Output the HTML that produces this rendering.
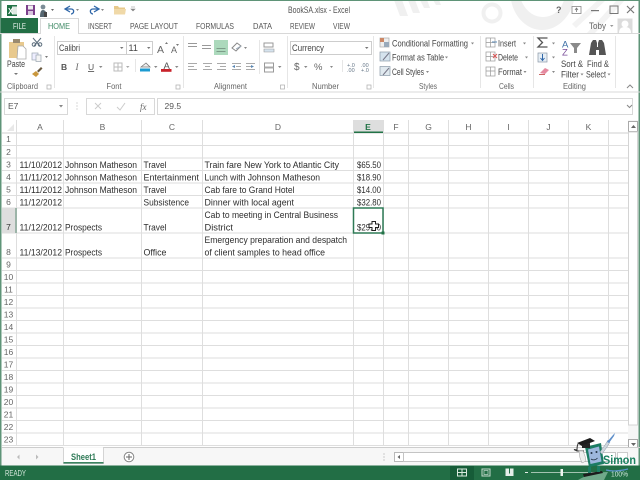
<!DOCTYPE html>
<html><head><meta charset="utf-8"><style>
html,body{margin:0;padding:0;background:#fff;width:640px;height:480px;overflow:hidden}
svg{display:block;font-family:"Liberation Sans",sans-serif}
text{fill:#555;font-size:9px}
.c text{fill:#2e2e2e;font-size:9.2px}
.h text{fill:#666;font-size:8.5px;text-anchor:middle}
.r text{fill:#666;font-size:8.5px;text-anchor:middle}
.g{stroke:#dedede;stroke-width:1;fill:none}
</style></head><body>
<svg width="640" height="480" viewBox="0 0 640 480" xmlns="http://www.w3.org/2000/svg">
<defs><filter id="b" x="-2%" y="-2%" width="104%" height="104%"><feGaussianBlur stdDeviation="0.38"/></filter></defs>
<g filter="url(#b)">
<rect width="640" height="480" fill="#fff"/>
<!-- title watermark -->
<g fill="#f0f0f0">
<path d="M394 0h8l6 16h-8zM408 0h7l5 13h-7zM420 0h7l3 8h-6zM433 0h6l2 5h-5z"/>
<circle cx="492" cy="13" r="8.500" fill="none" stroke="#f0f0f0" stroke-width="4"/>
<path d="M511 0h10c4 10 12 17 22 17 10 0 18-7 21-17h10c-3 16-16 30-32 30-15 0-28-13-31-30z"/>
<path d="M572 24l26-24h8l-30 28zM587 33l30-33h8l-30 33z" fill="#f3f3f3"/>
</g>
<!-- window edge -->
<rect x="0" y="0" width="640" height="1" fill="#5f9478"/>
<rect x="0" y="0" width="1.500" height="466" fill="#5f9478"/>
<rect x="638.500" y="0" width="1.500" height="466" fill="#5f9478"/>
<!-- QAT -->
<rect x="7" y="5" width="10" height="11" fill="#217346"/><rect x="12" y="6.500" width="5" height="8" fill="#dfe9e3"/>
<text x="8" y="14" style="font-size:8px;font-weight:bold;fill:#fff">X</text>
<rect x="26" y="5" width="9" height="10" fill="#7c3f8c"/><rect x="28" y="5.500" width="5" height="4" fill="#eee"/><rect x="28" y="11" width="5" height="4" fill="#d8c7de"/>
<circle cx="43" cy="7" r="2.400" fill="#7b8c96"/><path d="M40 17c0-5 1-7 3-7s4 2 4 7z" fill="#55666f"/><rect x="44" y="12" width="3" height="5" fill="#444"/>
<path d="M51 9h3l-1.500 2z" fill="#666"/>
<path d="M70 6l-5 3 5 3M66 9h5c4 0 3 5 0 5" fill="none" stroke="#2f66a8" stroke-width="1.300"/>
<path d="M76 9h3l-1.500 2z" fill="#888"/>
<path d="M94 6l5 3-5 3M98 9h-5c-4 0-3 5 0 5" fill="none" stroke="#2f66a8" stroke-width="1.300"/>
<path d="M101 9h3l-1.500 2z" fill="#888"/>
<path d="M114 6h4l1 1.500h6v7h-11z" fill="#e7c98b"/><path d="M114 9h12l-1 5.500h-11z" fill="#f0d9a8"/>
<path d="M131 7h4M131 9h4l-2 2z" stroke="#888" stroke-width=".6" fill="#888"/>
<text x="288" y="13" textLength="62" lengthAdjust="spacingAndGlyphs" style="font-size:9.200px;fill:#555">BookSA.xlsx - Excel</text>
<!-- window buttons -->
<text x="556" y="13" style="font-size:9px;font-weight:bold;fill:#666">?</text>
<rect x="572" y="6.500" width="9" height="7" fill="none" stroke="#888" stroke-width=".8"/><path d="M576.500 12V8M575 10l1.500-2 1.500 2" stroke="#777" stroke-width=".8" fill="none"/>
<rect x="591" y="10" width="8" height="1.200" fill="#777"/>
<rect x="610" y="6" width="8" height="7.500" fill="none" stroke="#777" stroke-width="1"/>
<path d="M627 6l7 7M634 6l-7 7" stroke="#777" stroke-width="1.200"/>
<!-- tabs -->
<rect x="1" y="18" width="37" height="15" fill="#206e44"/>
<text x="13" y="29" textLength="13" lengthAdjust="spacingAndGlyphs" style="font-size:8.500px;fill:#e8f2ec">FILE</text>
<path d="M0 33.500H40.500V18.500H78.500V33.500H640" fill="none" stroke="#d8d8d8"/>
<text x="48" y="29" textLength="22" lengthAdjust="spacingAndGlyphs" style="font-size:8.500px;fill:#3f8a66">HOME</text>
<text x="88" y="29" textLength="24" lengthAdjust="spacingAndGlyphs" style="font-size:8.500px;fill:#555">INSERT</text>
<text x="130" y="29" textLength="48" lengthAdjust="spacingAndGlyphs" style="font-size:8.500px;fill:#555">PAGE LAYOUT</text>
<text x="196" y="29" textLength="38" lengthAdjust="spacingAndGlyphs" style="font-size:8.500px;fill:#555">FORMULAS</text>
<text x="253" y="29" textLength="19" lengthAdjust="spacingAndGlyphs" style="font-size:8.500px;fill:#555">DATA</text>
<text x="290" y="29" textLength="25" lengthAdjust="spacingAndGlyphs" style="font-size:8.500px;fill:#555">REVIEW</text>
<text x="333" y="29" textLength="17" lengthAdjust="spacingAndGlyphs" style="font-size:8.500px;fill:#555">VIEW</text>
<text x="589" y="29" textLength="17" lengthAdjust="spacingAndGlyphs" style="font-size:9.500px;fill:#666">Toby</text>
<path d="M610 25h3.500l-1.750 2z" fill="#999"/>
<rect x="617.500" y="18.500" width="15" height="14.500" fill="#dcdcdc"/><circle cx="625" cy="24" r="3.500" fill="#fff"/><path d="M619 33c0-5 3-6 6-6s6 1 6 6z" fill="#fff"/>
<!-- ribbon bottom -->
<rect x="0" y="91.500" width="640" height="1" fill="#d8d8d8"/>
<!-- group separators -->
<g stroke="#e6e6e6"><path d="M54.500 36V88M183.500 36V88M287.500 36V88M373.500 36V88M480.500 36V88M533.500 36V88M615.500 36V88"/></g>
<g stroke="#e6e6e6"><path d="M259.500 40V74M342.500 60V72M135.500 59V72"/></g>
<!-- clipboard -->
<path d="M9 42h15v12h-7v4H9z" fill="#e8c98e"/><rect x="13" y="39" width="7" height="4" fill="#9a8a70"/>
<path d="M18 46h5l3 3v10h-9z" fill="#fff" stroke="#aaa" stroke-width=".8"/>
<text x="7" y="67" textLength="18" lengthAdjust="spacingAndGlyphs" style="font-size:9px;fill:#444">Paste</text>
<path d="M14 73h4l-2 2z" fill="#777"/>
<path d="M33 38l7 8M41 38l-7 8" stroke="#5b6d7c" stroke-width="1" fill="none"/><circle cx="34" cy="44.500" r="1.800" fill="none" stroke="#5b6d7c"/><circle cx="40" cy="44.500" r="1.800" fill="none" stroke="#5b6d7c"/>
<rect x="32" y="53" width="6" height="7" fill="#eef" stroke="#9aa5b0" stroke-width=".7"/><rect x="36" y="55" width="5" height="6.500" fill="#f4f4f4" stroke="#9aa5b0" stroke-width=".7"/>
<path d="M45 56h3l-1.500 2z" fill="#777"/>
<path d="M32 74l4-3 3 3-3 3z" fill="#c9973c"/><path d="M37 71l4-4 1.500 1.500-4 4z" fill="#6b5a40"/>
<text x="7" y="89" textLength="31" lengthAdjust="spacingAndGlyphs" style="font-size:8.500px;fill:#666">Clipboard</text>
<rect x="47" y="85" width="4" height="4" fill="none" stroke="#aaa" stroke-width=".7"/>
<!-- font -->
<rect x="57.500" y="41.500" width="95" height="13" fill="#fff" stroke="#cdcdcd"/><path d="M126.500 42V54" stroke="#cdcdcd"/>
<text x="59" y="51" textLength="21" lengthAdjust="spacingAndGlyphs" style="font-size:9px;fill:#444">Calibri</text>
<path d="M120 47h3.500l-1.750 2z" fill="#777"/>
<text x="128.500" y="51" style="font-size:9px;fill:#444">11</text><path d="M147 47h3.500l-1.750 2z" fill="#777"/>
<text x="157" y="53" style="font-size:10.500px;fill:#666">A</text><path d="M165 44h3l-1.500-2z" fill="#777"/>
<text x="171" y="53" style="font-size:9px;fill:#666">A</text><path d="M176 44h3l-1.500 2z" fill="#777"/>
<text x="61" y="70" style="font-size:8.500px;font-weight:bold;fill:#555">B</text>
<text x="75.500" y="70" style="font-size:9px;font-style:italic;font-family:'Liberation Serif',serif;fill:#666">I</text>
<text x="88" y="70" style="font-size:8.500px;fill:#555;text-decoration:underline">U</text>
<path d="M99 66h3.500l-1.750 2z" fill="#888"/>
<rect x="114" y="63" width="8" height="8" fill="none" stroke="#bbb"/><path d="M118 63v8M114 67h8" stroke="#bbb"/><path d="M126 66h3.500l-1.750 2z" fill="#aaa"/>
<path d="M141 67l5-4 4 4z" fill="#eee" stroke="#777" stroke-width=".8"/>
<rect x="140" y="68.500" width="10" height="3" fill="#1f9bd1"/><path d="M154 66h3.500l-1.750 2z" fill="#888"/>
<text x="163.500" y="69" style="font-size:9.500px;fill:#555">A</text><rect x="161" y="69" width="10.500" height="2.800" fill="#c8232c"/><path d="M175 66h3.500l-1.750 2z" fill="#888"/>
<text x="106.500" y="89" textLength="15" lengthAdjust="spacingAndGlyphs" style="font-size:8.500px;fill:#666">Font</text>
<rect x="176" y="85" width="4" height="4" fill="none" stroke="#aaa" stroke-width=".7"/>
<!-- alignment -->
<g stroke="#999" stroke-width=".9" fill="none"><path d="M188 43.500h9M188 46.500h9M202 45.500h9M202 48.500h9"/></g>
<rect x="214" y="40" width="14" height="15" fill="#acd9bc"/><path d="M216.500 48.500h9M216.500 51.500h9" stroke="#7d9c89"/>
<path d="M232 48l5-5 4 3-5 5z" fill="none" stroke="#888"/><path d="M236 49l5-3" stroke="#9ab" stroke-width="1"/><path d="M244 47h3l-1.500 2z" fill="#888"/>
<g stroke="#aaa" stroke-width=".9" fill="none">
<path d="M188 63.500h9M188 66.500h6M188 69.500h9M203 63.500h9M205 66.500h5M203 69.500h9M217 63.500h9M220 66.500h6M217 69.500h9"/>
<path d="M232 63.500h9M236 66.500h5M232 69.500h9M246 63.500h9M246 66.500h5M246 69.500h9"/>
</g>
<path d="M235 65l-3 1.500 3 1.500zM251 65l3 1.500-3 1.500z" fill="#5a88b5"/>
<rect x="264" y="43" width="9" height="4" fill="none" stroke="#999"/><path d="M264 49h10v3h-10z" fill="#d5e3ee" stroke="#999" stroke-width=".6"/>
<rect x="264.500" y="63" width="9" height="9" fill="none" stroke="#999"/><path d="M264.500 67.500h9" stroke="#aaa" stroke-width="2"/><path d="M278 66h3.500l-1.750 2z" fill="#888"/>
<text x="214" y="89" textLength="33" lengthAdjust="spacingAndGlyphs" style="font-size:8.500px;fill:#666">Alignment</text>
<rect x="280.500" y="85" width="4" height="4" fill="none" stroke="#aaa" stroke-width=".7"/>
<!-- number -->
<rect x="290.500" y="41.500" width="81" height="13" fill="#fff" stroke="#cdcdcd"/>
<text x="292" y="51" textLength="32" lengthAdjust="spacingAndGlyphs" style="font-size:9px;fill:#444">Currency</text>
<path d="M365 47h3.500l-1.750 2z" fill="#777"/>
<text x="294" y="70" style="font-size:10px;fill:#666">$</text><path d="M304 66h3.500l-1.750 2z" fill="#888"/>
<text x="314" y="70" style="font-size:9.500px;fill:#666">%</text><path d="M330 66h3l-1.500 2z" fill="#888"/>
<text x="347" y="67" style="font-size:5.500px;fill:#678">+.0</text><text x="347" y="72" style="font-size:5.500px;fill:#678">.00</text>
<text x="361" y="67" style="font-size:5.500px;fill:#678">.00</text><text x="361" y="72" style="font-size:5.500px;fill:#678">+.0</text>
<text x="312" y="89" textLength="27" lengthAdjust="spacingAndGlyphs" style="font-size:8.500px;fill:#666">Number</text>
<rect x="367" y="85" width="4" height="4" fill="none" stroke="#aaa" stroke-width=".7"/>
<!-- styles -->
<rect x="380" y="38" width="9" height="9" fill="#eee" stroke="#aaa" stroke-width=".7"/><rect x="380" y="38" width="4" height="4" fill="#c86" /><rect x="384" y="42" width="5" height="5" fill="#9ab"/>
<text x="392" y="46.500" textLength="76" lengthAdjust="spacingAndGlyphs" style="font-size:9.200px;fill:#444">Conditional Formatting</text><path d="M471 42.500h3l-1.500 2z" fill="#888"/>
<rect x="380" y="52" width="10" height="9" fill="#d5e3ee" stroke="#8a9aa8" stroke-width=".7"/><path d="M383 60l6-7" stroke="#778" />
<text x="392" y="60.500" textLength="52" lengthAdjust="spacingAndGlyphs" style="font-size:9.200px;fill:#444">Format as Table</text><path d="M445 56.500h3l-1.500 2z" fill="#888"/>
<rect x="380" y="66.500" width="10" height="9" fill="#e0e9ef" stroke="#8a9aa8" stroke-width=".7"/><path d="M383 75l6-7" stroke="#778"/>
<text x="392" y="75" textLength="32" lengthAdjust="spacingAndGlyphs" style="font-size:9.200px;fill:#444">Cell Styles</text><path d="M426 71h3l-1.500 2z" fill="#888"/>
<text x="419" y="89" textLength="18" lengthAdjust="spacingAndGlyphs" style="font-size:8.500px;fill:#666">Styles</text>
<!-- cells -->
<g fill="none" stroke="#999" stroke-width=".7"><rect x="486" y="38" width="9" height="9"/><path d="M490.500 38v9M486 42.500h9"/><rect x="486" y="52" width="9" height="9"/><path d="M490.500 52v9M486 56.500h9"/><rect x="486" y="67" width="9" height="9"/><path d="M490.500 67v9M486 71h9"/></g>
<path d="M492 42h5" stroke="#5a88b5"/><path d="M493 54l4 4M497 54l-4 4" stroke="#d55"/>
<text x="498" y="46.500" textLength="18" lengthAdjust="spacingAndGlyphs" style="font-size:9.200px;fill:#444">Insert</text><path d="M523 42.500h3l-1.500 2z" fill="#888"/>
<text x="498" y="60.500" textLength="20" lengthAdjust="spacingAndGlyphs" style="font-size:9.200px;fill:#444">Delete</text><path d="M525 56.500h3l-1.500 2z" fill="#888"/>
<text x="498" y="75" textLength="24" lengthAdjust="spacingAndGlyphs" style="font-size:9.200px;fill:#444">Format</text><path d="M523.500 71h3l-1.500 2z" fill="#888"/>
<text x="499" y="89" textLength="15" lengthAdjust="spacingAndGlyphs" style="font-size:8.500px;fill:#666">Cells</text>
<!-- editing -->
<path d="M547.500 38h-9.500l4.500 4.500-4.500 4.500h9.500" fill="none" stroke="#555" stroke-width="1.300"/><path d="M552 42.500h3l-1.500 2z" fill="#888"/>
<rect x="538" y="53" width="9" height="9" fill="#e6eef5" stroke="#8a98a5" stroke-width=".7"/><path d="M542.500 54v6M540.500 58l2 2.500 2-2.500" stroke="#2f66a8" fill="none"/><path d="M552 56.500h3l-1.500 2z" fill="#888"/>
<path d="M540 73l5-5 4 2-4 4z" fill="#e58aa0"/><rect x="539" y="74" width="6" height="1" fill="#c66"/><path d="M552 71h3l-1.500 2z" fill="#888"/>
<text x="562" y="47.500" style="font-size:9.500px;fill:#3a6ea5">A</text><text x="562" y="55.500" style="font-size:9.500px;fill:#7a4d9a">Z</text>
<path d="M570 43h11l-4 5v5h-3v-5z" fill="#8a8a8a"/>
<path d="M591 43l2-3h3l1 3v4h1v-4l1-3h3l2 3 2 12h-7v-5h-3v5h-7z" fill="#555"/>
<text x="561" y="67" textLength="22" lengthAdjust="spacingAndGlyphs" style="font-size:9px;fill:#444">Sort &amp;</text>
<text x="561" y="77.500" textLength="18" lengthAdjust="spacingAndGlyphs" style="font-size:9px;fill:#444">Filter</text><path d="M580.500 73.500h3l-1.500 2z" fill="#888"/>
<text x="587" y="67" textLength="22" lengthAdjust="spacingAndGlyphs" style="font-size:9px;fill:#444">Find &amp;</text>
<text x="586" y="77.500" textLength="20" lengthAdjust="spacingAndGlyphs" style="font-size:9px;fill:#444">Select</text><path d="M607.500 73.500h3l-1.500 2z" fill="#888"/>
<text x="563" y="89" textLength="23" lengthAdjust="spacingAndGlyphs" style="font-size:8.500px;fill:#666">Editing</text>
<path d="M627 88l3-3 3 3" fill="none" stroke="#888"/>
<!-- formula bar -->
<rect x="4.500" y="98.500" width="63" height="16" fill="#fff" stroke="#d8d8d8"/>
<text x="8" y="109" style="font-size:8.500px;fill:#555">E7</text>
<path d="M59 105h4l-2 2.500z" fill="#888"/>
<circle cx="77" cy="103" r=".6" fill="#bbb"/><circle cx="77" cy="106" r=".6" fill="#bbb"/><circle cx="77" cy="109" r=".6" fill="#bbb"/>
<rect x="86.500" y="98.500" width="68" height="16" fill="#fff" stroke="#d8d8d8"/>
<path d="M95 103l6 6M101 103l-6 6" stroke="#ccc" stroke-width="1"/>
<path d="M117 107l3 3 5-7" stroke="#ccc" stroke-width="1" fill="none"/>
<text x="140" y="110" style="font-size:9px;font-style:italic;font-family:'Liberation Serif',serif;fill:#666">fx</text>
<rect x="157.500" y="98.500" width="475" height="16" fill="#fff" stroke="#d8d8d8"/>
<text x="164.500" y="109" style="font-size:8.500px;fill:#555">29.5</text>
<path d="M628 105l2.500 2.500 2.500-2.500" stroke="#888" fill="none" transform="translate(-1 0)"/>
<!-- grid -->
<path d="M2 133H628" stroke="#cfcfcf" fill="none"/>
<g class="g">
<path d="M2 145.500H628M2 158H628M2 170.500H628M2 183H628M2 195.500H628M2 208H628M2 233H628M2 258H628M2 270.500H628M2 283H628M2 295.500H628M2 308H628M2 320.500H628M2 333H628M2 345.500H628M2 358H628M2 370.500H628M2 383H628M2 395.500H628M2 408H628M2 420.500H628M2 433H628M2 445.500H628"/>
<path d="M16.500 120V446M63.500 120V446M141.500 120V446M202.500 120V446M353.500 120V446M383.500 120V446M408.500 120V446M448.500 120V446M488.500 120V446M528.500 120V446M568.500 120V446M608.500 120V446"/>
</g>
<path d="M7 131l7-7v7z" fill="#e8e8e8"/>
<rect x="354" y="120" width="29" height="13" fill="#dedede"/><rect x="354" y="131.500" width="29" height="1.500" fill="#217346"/>
<rect x="2" y="208" width="14" height="25" fill="#dedede"/><rect x="15.500" y="208" width="1" height="25" fill="#5a8a72"/>
<g class="h">
<text x="40" y="130">A</text><text x="102.500" y="130">B</text><text x="172" y="130">C</text><text x="278" y="130">D</text>
<text x="368" y="130" style="fill:#217346;font-weight:bold">E</text><text x="396" y="130">F</text><text x="428.500" y="130">G</text><text x="468.500" y="130">H</text><text x="508.500" y="130">I</text><text x="548.500" y="130">J</text><text x="588.500" y="130">K</text>
</g>
<g class="r">
<text x="8.500" y="142">1</text><text x="8.500" y="155">2</text><text x="8.500" y="167.500">3</text><text x="8.500" y="180">4</text><text x="8.500" y="192.500">5</text><text x="8.500" y="205">6</text><text x="8.500" y="230" style="fill:#333">7</text><text x="8.500" y="255">8</text><text x="8.500" y="267.500">9</text><text x="8.500" y="280">10</text><text x="8.500" y="292.500">11</text><text x="8.500" y="305">12</text><text x="8.500" y="317.500">13</text><text x="8.500" y="330">14</text><text x="8.500" y="342.500">15</text><text x="8.500" y="355">16</text><text x="8.500" y="367.500">17</text><text x="8.500" y="380">18</text><text x="8.500" y="392.500">19</text><text x="8.500" y="405">20</text><text x="8.500" y="417.500">21</text><text x="8.500" y="430">22</text><text x="8.500" y="442.500">23</text>
</g>
<g class="c">
<text x="19.500" y="168" textLength="42.500" lengthAdjust="spacingAndGlyphs">11/10/2012</text><text x="65" y="168" textLength="72" lengthAdjust="spacingAndGlyphs">Johnson Matheson</text><text x="143.500" y="168" textLength="23" lengthAdjust="spacingAndGlyphs">Travel</text><text x="204.500" y="168" textLength="134.500" lengthAdjust="spacingAndGlyphs">Train fare New York to Atlantic City</text><text x="357" y="168" textLength="24" lengthAdjust="spacingAndGlyphs">$65.50</text>
<text x="19.500" y="180.500" textLength="42.500" lengthAdjust="spacingAndGlyphs">11/11/2012</text><text x="65" y="180.500" textLength="72" lengthAdjust="spacingAndGlyphs">Johnson Matheson</text><text x="143.500" y="180.500" textLength="55.500" lengthAdjust="spacingAndGlyphs">Entertainment</text><text x="204.500" y="180.500" textLength="115.500" lengthAdjust="spacingAndGlyphs">Lunch with Johnson Matheson</text><text x="357" y="180.500" textLength="24" lengthAdjust="spacingAndGlyphs">$18.90</text>
<text x="19.500" y="193" textLength="42.500" lengthAdjust="spacingAndGlyphs">11/11/2012</text><text x="65" y="193" textLength="72" lengthAdjust="spacingAndGlyphs">Johnson Matheson</text><text x="143.500" y="193" textLength="23" lengthAdjust="spacingAndGlyphs">Travel</text><text x="204.500" y="193" textLength="90" lengthAdjust="spacingAndGlyphs">Cab fare to Grand Hotel</text><text x="357" y="193" textLength="24" lengthAdjust="spacingAndGlyphs">$14.00</text>
<text x="19.500" y="205.500" textLength="42.500" lengthAdjust="spacingAndGlyphs">11/12/2012</text><text x="143.500" y="205.500" textLength="45.500" lengthAdjust="spacingAndGlyphs">Subsistence</text><text x="204.500" y="205.500" textLength="89.500" lengthAdjust="spacingAndGlyphs">Dinner with local agent</text><text x="357" y="205.500" textLength="24" lengthAdjust="spacingAndGlyphs">$32.80</text>
<text x="204.500" y="218" textLength="133.500" lengthAdjust="spacingAndGlyphs">Cab to meeting in Central Business</text>
<text x="19.500" y="230.500" textLength="42.500" lengthAdjust="spacingAndGlyphs">11/12/2012</text><text x="65" y="230.500" textLength="37" lengthAdjust="spacingAndGlyphs">Prospects</text><text x="143.500" y="230.500" textLength="23" lengthAdjust="spacingAndGlyphs">Travel</text><text x="204.500" y="230.500" textLength="28.500" lengthAdjust="spacingAndGlyphs">District</text><text x="357" y="230.500" textLength="24" lengthAdjust="spacingAndGlyphs">$29.50</text>
<text x="204.500" y="243" textLength="142.500" lengthAdjust="spacingAndGlyphs">Emergency preparation and despatch</text>
<text x="19.500" y="255.500" textLength="42.500" lengthAdjust="spacingAndGlyphs">11/13/2012</text><text x="65" y="255.500" textLength="37" lengthAdjust="spacingAndGlyphs">Prospects</text><text x="143.500" y="255.500" textLength="23" lengthAdjust="spacingAndGlyphs">Office</text><text x="204.500" y="255.500" textLength="120.500" lengthAdjust="spacingAndGlyphs">of client samples to head office</text>
</g>
<!-- selection -->
<rect x="353.500" y="208" width="29.500" height="25" fill="none" stroke="#2f7a57" stroke-width="1.500"/>
<rect x="381.500" y="231.500" width="3" height="3" fill="#217346"/>
<!-- cursor -->
<path d="M372 221.500h3.500v2.500h3v3.500h-3v3h-3.500v-3h-3v-3.500h3z" fill="#fff" stroke="#222" stroke-width="1"/>
<!-- vertical scrollbar -->
<rect x="628" y="120" width="10.500" height="326" fill="#f6f6f6"/>
<rect x="628.500" y="121.500" width="9" height="10" fill="#fff" stroke="#aaa"/><path d="M631 128l2.500-3 2.500 3z" fill="#666"/>
<rect x="628.500" y="132" width="9" height="293" fill="#fff" stroke="#d4d4d4"/>
<rect x="628.500" y="439.500" width="9" height="9" fill="#fff" stroke="#aaa"/><path d="M631 443l2.500 3 2.500-3z" fill="#666"/>
<!-- sheet tabs -->
<rect x="1.500" y="447" width="637" height="19" fill="#f7f7f7"/>
<path d="M2 447.500H63M103 447.500H640" stroke="#cdcdcd"/>
<path d="M19.500 454.500l-2.500 2.500 2.500 2.500zM36 454.500l2.500 2.500-2.500 2.500z" fill="#bbb"/>
<rect x="63.500" y="448" width="40" height="15" fill="#fff"/>
<path d="M63.500 447.500V463.500H103.500V447.500" fill="none" stroke="#d4d4d4"/>
<rect x="63.500" y="462" width="40" height="1.600" fill="#3b8361"/>
<text x="71" y="460" textLength="25" lengthAdjust="spacingAndGlyphs" style="font-size:9px;font-weight:bold;fill:#2f7a57">Sheet1</text>
<circle cx="129" cy="457" r="4.800" fill="#fff" stroke="#888"/><path d="M129 454v6M126 457h6" stroke="#666"/>
<circle cx="384" cy="454" r=".6" fill="#aaa"/><circle cx="384" cy="457" r=".6" fill="#aaa"/><circle cx="384" cy="460" r=".6" fill="#aaa"/>
<rect x="394.500" y="452.500" width="9" height="9" fill="#fff" stroke="#b8b8b8"/><path d="M400 455l-2.500 2 2.500 2z" fill="#666"/>
<rect x="403.500" y="452.500" width="212" height="9" fill="#fff" stroke="#c4c4c4"/>
<rect x="617.500" y="452.500" width="10" height="9" fill="#fff" stroke="#ccc"/>
<!-- status bar -->
<rect x="0" y="465.500" width="640" height="14.500" fill="#206e44"/>
<text x="5" y="476" textLength="21" lengthAdjust="spacingAndGlyphs" style="font-size:8px;fill:#d8e8de">READY</text>
<rect x="450" y="466" width="24" height="14" fill="#185c37"/>
<rect x="457.500" y="469" width="9" height="7" fill="none" stroke="#d8e8de"/><path d="M462 469v7M457.500 472.500h9" stroke="#d8e8de"/>
<rect x="482" y="469" width="8" height="7" fill="none" stroke="#c4d8cc"/><rect x="484" y="470.500" width="4" height="4" fill="none" stroke="#c4d8cc" stroke-width=".7"/>
<path d="M505.500 468.500h8v7.500h-8z" fill="#e4eee8"/><rect x="509" y="468.500" width="1" height="5" fill="#206e44"/>
<path d="M525 472.500h3" stroke="#e4eee8"/><path d="M531 472.500H600" stroke="#cfe0d6" stroke-width=".8"/>
<rect x="560.500" y="469" width="2.500" height="7" fill="#eef5f0"/>
<!-- Simon logo -->
<path d="M578 480c8-5 20-8 30-8l-4 8z" fill="#6fa98a"/>
<path d="M583 474l19-3 1 2-19 4z" fill="#1d1d1d"/>
<path d="M585 447l16-4 3 21-15 3z" fill="#1f7c64"/>
<path d="M588 449.500l11-3 2.500 15-11 2.500z" fill="#9db7dd"/>
<circle cx="591.500" cy="453" r="1" fill="#234"/><circle cx="596.500" cy="452" r="1" fill="#234"/>
<path d="M591 459c2 1.500 5 1 6.500-1" stroke="#234" fill="none" stroke-width=".8"/>
<rect x="588" y="467" width="3" height="6" fill="#1f7c64"/><rect x="597" y="466" width="3" height="6" fill="#1f7c64"/>
<path d="M577 443l13-5 5 3-13 5z" fill="#1a1a1a"/><path d="M582 445v3h8v-5z" fill="#222"/>
<path d="M578 444c-1 2-1 5-1 6l-3-.5 3 1.500h7" fill="none" stroke="#333" stroke-width="1"/>
<path d="M579 451l1 7 2 5 4-2-1-5-2-5z" fill="#eee" stroke="#999" stroke-width=".5"/>
<path d="M600 452l5-7 3-5 2 2-3 5-5 7z" fill="#cfd6dd" stroke="#8899aa" stroke-width=".5"/>
<path d="M607 442l6-7 2-2-1 3-5 7z" fill="#5f8fc9"/>
<text x="603" y="464" textLength="33" lengthAdjust="spacingAndGlyphs" style="font-size:11.500px;font-weight:bold;fill:#1a8060">Simon</text>
<text x="611" y="476.500" textLength="17" lengthAdjust="spacingAndGlyphs" style="font-size:7.500px;fill:#cfe6da">100%</text>
<path d="M606 470c6 1.500 14 1 22-1" stroke="#5b93c9" stroke-width="1.200" fill="none"/>
</g>
</svg>
</body></html>
